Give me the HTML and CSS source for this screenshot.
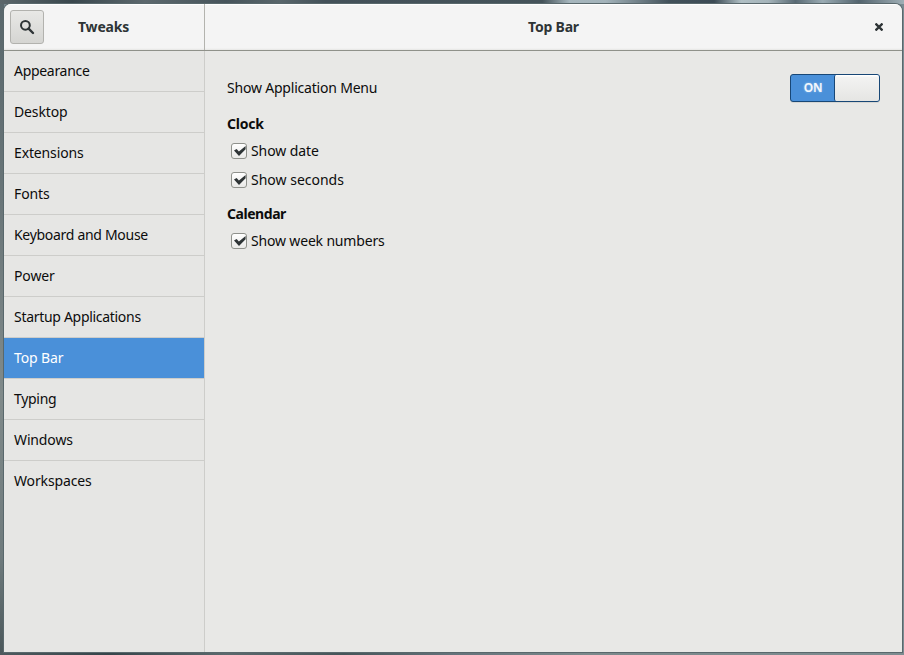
FILE: index.html
```
<!DOCTYPE html>
<html lang="en">
<head>
<meta charset="utf-8">
<title>Tweaks</title>
<link rel="stylesheet" href="styles.css">
</head>
<body>
<div class="window">
  <header class="header">
    <div class="header-side">
      <button class="search" aria-label="Search">
        <svg width="16" height="16" viewBox="0 0 16 16" fill="none" stroke="#2e3436"><circle cx="6.4" cy="6.3" r="4.4" stroke-width="2"/><path d="M9.6 9.6L14 14" stroke-width="2.4" stroke-linecap="round"/></svg>
      </button>
      <h1 class="side-title">Tweaks</h1>
    </div>
    <div class="header-main">
      <h2 class="title">Top Bar</h2>
      <button class="close" aria-label="Close">
        <svg width="8" height="8" viewBox="0 0 8 8" fill="none" stroke="#2e3436" stroke-width="2.3"><path d="M.5 .5L7.5 7.5M7.5 .5L.5 7.5"/></svg>
      </button>
    </div>
  </header>
  <div class="body">
    <nav class="sidebar">
      <a class="row tight">Appearance</a>
      <a class="row">Desktop</a>
      <a class="row">Extensions</a>
      <a class="row">Fonts</a>
      <a class="row tight">Keyboard and Mouse</a>
      <a class="row">Power</a>
      <a class="row tight">Startup Applications</a>
      <a class="row selected">Top Bar</a>
      <a class="row tight">Typing</a>
      <a class="row">Windows</a>
      <a class="row">Workspaces</a>
    </nav>
    <main class="content">
      <div class="setting">
        <span class="setting-label">Show Application Menu</span>
        <div class="switch"><span class="switch-on">ON</span><span class="switch-knob"></span></div>
      </div>
      <h3 class="group">Clock</h3>
      <div class="check"><span class="box"><svg width="14" height="14" viewBox="0 0 14 14"><path d="M2 6.4L4.6 4.9L6.9 7.6L13.6 1.9V5.2L7 12Z" fill="#2e3436"/></svg></span><span>Show date</span></div>
      <div class="check"><span class="box"><svg width="14" height="14" viewBox="0 0 14 14"><path d="M2 6.4L4.6 4.9L6.9 7.6L13.6 1.9V5.2L7 12Z" fill="#2e3436"/></svg></span><span class="seconds">Show seconds</span></div>
      <h3 class="group calendar">Calendar</h3>
      <div class="check"><span class="box"><svg width="14" height="14" viewBox="0 0 14 14"><path d="M2 6.4L4.6 4.9L6.9 7.6L13.6 1.9V5.2L7 12Z" fill="#2e3436"/></svg></span><span class="weeks">Show week numbers</span></div>
    </main>
  </div>
</div>
</body>
</html>
```
FILE: styles.css
```
* { box-sizing: border-box; }
body {
  margin: 0;
  height: 655px;
  padding: 4px 2px 3px 4px;
  overflow: hidden;
  font: 14px/20px "Noto Sans", sans-serif;
  color: #0c0c0c;
  background:
    linear-gradient(90deg, #5b666a 0, #39474d 8%, #5c686d 16%, #46545b 25%, #59666b 31%, #435159 36%, #45535a 60%, #a6b6bd 63%, #a3b3ba 67%, #42515a 74%, #3c4b55 79%, #b0bfc4 82%, #a5b4ba 85%, #596a74 88%, #9aabb3 91%, #53646e 95%, #a0afb6 100%) 0 0 / 904px 4px no-repeat,
    linear-gradient(90deg, #4e5a5e 0, #36454a 12%, #5b696d 25%, #465559 38%, #64727a 50%, #7b898b 65%, #7d8c90 100%) 0 652px / 904px 3px no-repeat,
    linear-gradient(#59676c, #697578 30%, #808a8a 60%, #6f7b7d 85%, #4b575a) 0 0 / 4px 655px no-repeat,
    #7b8b92;
}
h1, h2, h3 { margin: 0; font-size: inherit; }
button { margin: 0; padding: 0; border: 0; background: none; }
svg { display: block; }
.window {
  height: 648px;
  display: flex;
  flex-direction: column;
  border-radius: 7px 7px 0 0;
  background: #e8e8e6;
  box-shadow: 0 0 0 1px #59686c;
  overflow: hidden;
}
.header {
  height: 47px;
  flex: none;
  display: flex;
  border-bottom: 1px solid #8f918a;
  background: linear-gradient(#fff 0 1px, #f4f4f4 1px 44px, #e6e6e4);
  color: #2e3436;
}
.header-side {
  width: 201px;
  display: flex;
  align-items: center;
  padding-left: 6px;
  border-right: 1px solid #b3b3ae;
}
.search {
  width: 34px;
  height: 34px;
  display: grid;
  place-items: center;
  border: 1px solid #b2b2ae;
  border-radius: 3px;
  background: linear-gradient(#e8e8e6, #d5d5d2);
}
.side-title { margin-left: 34px; letter-spacing: -.2px; }
.title { letter-spacing: -.2px; }
.header-main {
  flex: 1;
  display: flex;
  align-items: center;
  justify-content: space-between;
  padding: 0 19px 0 323px;
}
.body { flex: 1; display: flex; }
.sidebar {
  width: 201px;
  border-right: 1px solid #cdcdca;
  background: #e6e6e4;
}
.row {
  display: block;
  height: 41px;
  padding: 10px;
  border-bottom: 1px solid #cdcdca;
  letter-spacing: -.14px;
}
.tight { letter-spacing: -.3px; }
.row:last-child { border-bottom: 0; }
.selected { background: #4a90d9; color: #fff; background-clip: padding-box; }
.content { flex: 1; padding: 23px 22px 0; }
.setting { height: 28px; display: flex; align-items: center; justify-content: space-between; }
.setting-label { letter-spacing: -.2px; }
.switch {
  width: 90px;
  height: 28px;
  display: flex;
  border: 1px solid #184776;
  border-radius: 3px;
  background: #4a90d9;
  box-shadow: 0 1px 0 #d6d6d3;
}
.switch-on {
  flex: 1;
  padding-left: 1px;
  text-align: center;
  color: #f4f8fc;
  font: 600 12px/26px "Noto Sans", sans-serif;
  letter-spacing: -.3px;
  text-shadow: 0 0 2px #a9cbee;
}
.switch-knob {
  width: 45px;
  border-left: 1px solid #184776;
  border-radius: 2px;
  background: linear-gradient(#fff 0 1px, #f3f3f2 2px, #e5e5e3);
}
.group { margin-top: 12px; line-height: 20px; letter-spacing: -.2px; }
.check {
  height: 20px;
  margin: 7px 0 9px 4px;
  display: flex;
  align-items: center;
  gap: 4px;
}
.check { letter-spacing: -.1px; }
.seconds { letter-spacing: 0; }
.weeks { letter-spacing: -.17px; }
.box {
  width: 16px;
  height: 16px;
  border: 1px solid #8f918c;
  border-radius: 3px;
  background: linear-gradient(#fff, #e9e9e7);
}
.calendar { margin-top: 14px; letter-spacing: -.45px; }
```
